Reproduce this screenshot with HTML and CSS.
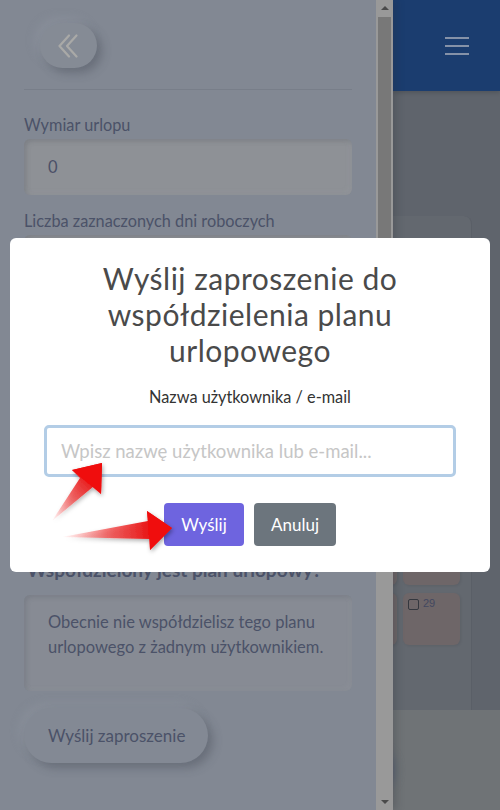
FILE: index.html
```html
<!DOCTYPE html>
<html lang="pl">
<head>
<meta charset="utf-8">
<title>Plan urlopowy</title>
<link rel="stylesheet" href="styles.css">
</head>
<body>
<div class="page">
  <aside class="sidebar">
    <div class="sidebar-inner">
      <button class="back-btn" type="button" aria-label="Zwiń">
        <svg width="22" height="24" viewBox="0 0 22 24"><path d="M12 1.5 L2.5 12 L12 22.5 M19.5 1.5 L10 12 L19.5 22.5" fill="none" stroke="#a9a9a7" stroke-width="2.2" stroke-linecap="round" stroke-linejoin="round"/></svg>
      </button>
      <div class="divider"></div>
      <div class="field-label">Wymiar urlopu</div>
      <div class="field-box">0</div>
      <div class="field-label">Liczba zaznaczonych dni roboczych</div>
      <div class="field-box">0</div>
      <div class="field-label">Pozostało dni urlopu</div>
      <div class="field-box">0</div>
      <div class="field-label">Rok</div>
      <div class="field-box">2024</div>
      <div class="share-title">Współdzielony jest plan urlopowy?</div>
      <div class="info-box">Obecnie nie współdzielisz tego planu urlopowego z żadnym użytkownikiem.</div>
      <button class="pill-btn" type="button">Wyślij zaproszenie</button>
    </div>
    <div class="scrollbar">
      <span class="sb-arrow sb-up"></span>
      <div class="sb-thumb"></div>
      <div class="sb-rest"></div>
      <span class="sb-arrow sb-down"></span>
    </div>
  </aside>
  <main class="main">
    <header class="topbar">
      <span class="hamburger"><i></i><i></i><i></i></span>
    </header>
    <div class="content">
      <div class="card">
        <div class="cal-grid">
          <div class="cell"><span class="cb"></span><span class="num">30</span></div>
          <div class="cell"><span class="cb"></span><span class="num">1</span></div>
          <div class="cell"><span class="cb"></span><span class="num">7</span></div>
          <div class="cell"><span class="cb"></span><span class="num">8</span></div>
          <div class="cell"><span class="cb"></span><span class="num">14</span></div>
          <div class="cell"><span class="cb"></span><span class="num">15</span></div>
          <div class="cell"><span class="cb"></span><span class="num">21</span></div>
          <div class="cell"><span class="cb"></span><span class="num">22</span></div>
          <div class="cell"><span class="cb"></span><span class="num">28</span></div>
          <div class="cell"><span class="cb"></span><span class="num">29</span></div>
          <div class="cell"><span class="cb"></span><span class="num">28</span></div>
          <div class="cell"><span class="cb"></span><span class="num">29</span></div>
        </div>
      </div>
      <div class="footer-area"><span class="fab-shadow"></span></div>
    </div>
  </main>
</div>

<div class="modal">
  <h2 class="modal-title">Wyślij zaproszenie do współdzielenia planu urlopowego</h2>
  <div class="modal-label">Nazwa użytkownika / e-mail</div>
  <input class="modal-input" type="text" placeholder="Wpisz nazwę użytkownika lub e-mail...">
  <div class="modal-actions">
    <button class="btn btn-primary" type="button">Wyślij</button>
    <button class="btn btn-secondary" type="button">Anuluj</button>
  </div>
</div>

<svg class="annotations" width="500" height="810" viewBox="0 0 500 810">
  <defs>
    <linearGradient id="g1" gradientUnits="userSpaceOnUse" x1="52" y1="521" x2="92" y2="478">
      <stop offset="0" stop-color="#ff4040" stop-opacity="0"/>
      <stop offset="0.55" stop-color="#f03a3a" stop-opacity="0.75"/>
      <stop offset="1" stop-color="#e81010"/>
    </linearGradient>
    <linearGradient id="g2" gradientUnits="userSpaceOnUse" x1="62" y1="536" x2="152" y2="530">
      <stop offset="0" stop-color="#ff4040" stop-opacity="0"/>
      <stop offset="0.55" stop-color="#f03a3a" stop-opacity="0.75"/>
      <stop offset="1" stop-color="#e81010"/>
    </linearGradient>
    <filter id="sh" x="-30%" y="-30%" width="160%" height="160%">
      <feDropShadow dx="1" dy="2" stdDeviation="2.2" flood-color="#000" flood-opacity="0.35"/>
    </filter>
  </defs>
  <g filter="url(#sh)">
    <path d="M52 521 L80 478 L72 470 L102 463 L101 494 L94 486 Z" fill="url(#g1)"/>
    <path d="M72 470 L102 463 L101 494 Z" fill="#f00d0d"/>
    <path d="M62 537 L148 521 L147 511 L172 528 L150 550 L150 539 Z" fill="url(#g2)"/>
    <path d="M147 511 L172 528 L150 550 Z" fill="#f00d0d"/>
  </g>
</svg>
</body>
</html>
```

FILE: styles.css
```css
html, body {
  margin: 0;
  padding: 0;
}
body {
  width: 500px;
  height: 810px;
  overflow: hidden;
  font-family: "Lato", "Noto Sans", sans-serif;
  background: #5f646c;
  position: relative;
}

.page {
  display: flex;
  height: 810px;
}

/* ---------- sidebar ---------- */
.sidebar {
  width: 393px;
  flex: none;
  display: flex;
  background: #828893;
  position: relative;
  z-index: 2;
  box-shadow: 3px 0 8px rgba(40, 44, 52, 0.25);
}
.sidebar-inner {
  width: 376px;
  flex: none;
  box-sizing: border-box;
  padding: 23px 24px 0;
  display: flex;
  flex-direction: column;
  align-items: flex-start;
}
.back-btn {
  margin-left: 16px;
  width: 57px;
  height: 45px;
  border: none;
  border-radius: 23px;
  background: #858b95;
  box-shadow: 5px 5px 10px rgba(60, 65, 78, 0.35), -5px -5px 10px rgba(150, 156, 166, 0.35);
  display: flex;
  align-items: center;
  justify-content: center;
  padding: 0 2px 0 0;
}
.divider {
  margin-top: 21px;
  width: 100%;
  height: 1px;
  background: #787e89;
}
.field-label {
  margin-top: 16px;
  font-size: 16.3px;
  line-height: 20px;
  color: #4b5268;
}
.divider + .field-label {
  margin-top: 25px;
}
.field-box {
  margin-top: 4px;
  width: 100%;
  height: 56px;
  box-sizing: border-box;
  padding-left: 24px;
  line-height: 56px;
  font-size: 16.5px;
  color: #4b5068;
  border-radius: 6px;
  background: #8e9196;
  box-shadow: inset 2px 2px 5px rgba(70, 74, 84, 0.25), inset -2px -2px 5px rgba(160, 164, 170, 0.25);
}
.share-title {
  margin-top: 75px;
  font-size: 19px;
  line-height: 24px;
  font-weight: 700;
  color: #4b5268;
  padding-left: 3px;
}
.info-box {
  margin-top: 13px;
  width: 100%;
  height: 96px;
  box-sizing: border-box;
  padding: 15px 24px 0;
  font-size: 16.5px;
  line-height: 25px;
  color: #4b5268;
  border-radius: 6px;
  background: #878b94;
  box-shadow: inset 2px 2px 5px rgba(70, 74, 84, 0.2), inset -2px -2px 5px rgba(160, 164, 170, 0.2);
}
.pill-btn {
  margin-top: 17px;
  width: 184px;
  height: 55px;
  border: none;
  border-radius: 28px;
  background: #838994;
  text-align: left;
  padding: 0 0 0 24px;
  font-family: inherit;
  font-size: 17px;
  color: #4b5268;
  box-shadow: 5px 5px 10px rgba(60, 65, 78, 0.35), -5px -5px 10px rgba(150, 156, 166, 0.3);
}

/* fake scrollbar */
.scrollbar {
  width: 17px;
  flex: none;
  background: #999999;
  display: flex;
  flex-direction: column;
  align-items: center;
}
.sb-arrow {
  flex: none;
  width: 0;
  height: 0;
  border-left: 4px solid transparent;
  border-right: 4px solid transparent;
}
.sb-up {
  margin: 6px 0 7px;
  border-bottom: 4px solid #4a4a4a;
}
.sb-down {
  margin: 7px 0 6px;
  border-top: 4px solid #4a4a4a;
}
.sb-thumb {
  width: 13px;
  height: 480px;
  background: #787878;
}
.sb-rest {
  flex: 1;
}

/* ---------- main ---------- */
.main {
  flex: 1;
  display: flex;
  flex-direction: column;
  min-width: 0;
}
.topbar {
  height: 91px;
  flex: none;
  background: #1b3d6f;
  display: flex;
  align-items: center;
  justify-content: flex-end;
  padding-right: 31px;
  position: relative;
  z-index: 1;
  box-shadow: 0 2px 4px rgba(0, 0, 0, 0.15);
}
.hamburger {
  display: flex;
  flex-direction: column;
  gap: 6px;
  width: 24px;
}
.hamburger i {
  display: block;
  height: 2px;
  background: #8592a8;
}
.content {
  flex: 1;
  display: flex;
  flex-direction: column;
  background: #5f646c;
}
.card {
  margin-top: 125px;
  margin-left: -60px;
  width: 139px;
  height: 494px;
  box-sizing: border-box;
  padding: 77px 0 0 7px;
  background: #63686f;
  border-radius: 0 8px 0 0;
  border-right: 1px solid #5a5f67;
}
.cal-grid {
  display: grid;
  grid-template-columns: 57px 57px;
  grid-auto-rows: 52px;
  column-gap: 6px;
  row-gap: 8px;
}
.cell {
  background: #6e6668;
  border-radius: 6px;
  display: flex;
  align-items: flex-start;
  padding: 5px 0 0 5px;
  box-shadow: 1px 1px 3px rgba(0, 0, 0, 0.08);
}
.cb {
  width: 11px;
  height: 11px;
  box-sizing: border-box;
  border: 1.5px solid #34373e;
  border-radius: 2px;
  margin-top: 1px;
}
.num {
  margin-left: 4px;
  font-family: "Liberation Sans", Arial, sans-serif;
  font-size: 11px;
  line-height: 11px;
  color: #434860;
}
.footer-area {
  flex: 1;
  background: #6f7376;
  position: relative;
}
.fab-shadow {
  position: absolute;
  left: -30px;
  top: 40px;
  width: 32px;
  height: 40px;
  border-radius: 50%;
  background: #5a6474;
  filter: blur(5px);
}

/* ---------- modal ---------- */
.modal {
  position: fixed;
  left: 10px;
  top: 238px;
  width: 480px;
  height: 334px;
  box-sizing: border-box;
  background: #ffffff;
  border-radius: 6px;
  z-index: 10;
  padding: 22px 40px 0;
  display: flex;
  flex-direction: column;
  align-items: center;
}
.modal-title {
  margin: 0;
  width: 330px;
  text-align: center;
  font-size: 30px;
  line-height: 36px;
  letter-spacing: 0.5px;
  font-weight: 400;
  color: #4a4a4a;
}
.modal-label {
  margin-top: 19px;
  font-size: 16.3px;
  line-height: 20px;
  color: #333333;
}
.modal-input {
  margin-top: 18px;
  width: 412px;
  height: 52px;
  box-sizing: border-box;
  border: 3px solid #b3cde6;
  border-radius: 5px;
  padding: 0 14px;
  font-family: inherit;
  font-size: 18.5px;
  color: #333;
  outline: none;
}
.modal-input::placeholder {
  color: #c6c6c6;
}
.modal-actions {
  margin-top: 26px;
  display: flex;
  gap: 10px;
}
.btn {
  height: 43px;
  border: none;
  border-radius: 4px;
  font-family: inherit;
  font-size: 17px;
  color: #ffffff;
  padding: 0 17px;
}
.btn-primary {
  width: 80px;
  background: #6e64df;
}
.btn-secondary {
  width: 82px;
  background: #6c757d;
}

/* ---------- annotation arrows ---------- */
.annotations {
  position: absolute;
  left: 0;
  top: 0;
  z-index: 20;
  pointer-events: none;
}
```
